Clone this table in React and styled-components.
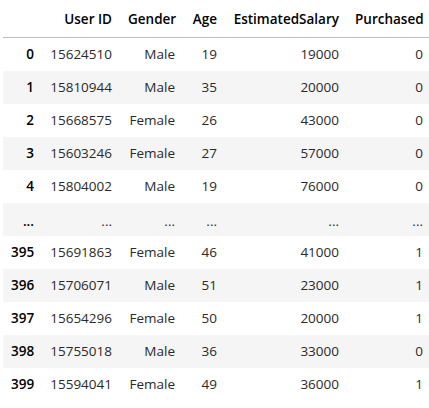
import React from "react";
import styled, { createGlobalStyle } from "styled-components";

const GlobalStyle = createGlobalStyle`
  body {
    margin: 0;
    background: #ffffff;
    overflow: hidden;
    font-family: "Open Sans", "Noto Sans", sans-serif;
  }
`;

const columns = [
  { key: "userId", label: "User ID", width: 78 },
  { key: "gender", label: "Gender", width: 63 },
  { key: "age", label: "Age", width: 42 },
  { key: "salary", label: "EstimatedSalary", width: 122 },
  { key: "purchased", label: "Purchased", width: 84 },
];

const rows = [
  { idx: "0", userId: "15624510", gender: "Male", age: "19", salary: "19000", purchased: "0" },
  { idx: "1", userId: "15810944", gender: "Male", age: "35", salary: "20000", purchased: "0" },
  { idx: "2", userId: "15668575", gender: "Female", age: "26", salary: "43000", purchased: "0" },
  { idx: "3", userId: "15603246", gender: "Female", age: "27", salary: "57000", purchased: "0" },
  { idx: "4", userId: "15804002", gender: "Male", age: "19", salary: "76000", purchased: "0" },
  { idx: "...", userId: "...", gender: "...", age: "...", salary: "...", purchased: "..." },
  { idx: "395", userId: "15691863", gender: "Female", age: "46", salary: "41000", purchased: "1" },
  { idx: "396", userId: "15706071", gender: "Male", age: "51", salary: "23000", purchased: "1" },
  { idx: "397", userId: "15654296", gender: "Female", age: "50", salary: "20000", purchased: "1" },
  { idx: "398", userId: "15755018", gender: "Male", age: "36", salary: "33000", purchased: "0" },
  { idx: "399", userId: "15594041", gender: "Female", age: "49", salary: "36000", purchased: "1" },
];

export default function App() {
  return (
    <>
      <GlobalStyle />
      <Wrapper>
        <Frame>
          <colgroup>
            <col style={{ width: 39 }} />
            {columns.map((c) => (
              <col key={c.key} style={{ width: c.width }} />
            ))}
          </colgroup>
          <thead>
            <tr>
              <HeadCell />
              {columns.map((c) => (
                <HeadCell key={c.key}>{c.label}</HeadCell>
              ))}
            </tr>
          </thead>
          <tbody>
            {rows.map((row, i) => (
              <Row key={row.idx + i} $striped={i % 2 === 1}>
                <IndexCell $ellipsis={row.idx === "..."}>{row.idx}</IndexCell>
                {columns.map((c) => (
                  <Cell key={c.key} $ellipsis={row[c.key] === "..."}>
                    {row[c.key]}
                  </Cell>
                ))}
              </Row>
            ))}
          </tbody>
        </Frame>
      </Wrapper>
    </>
  );
}

const Wrapper = styled.div`
  padding-left: 3px;
  width: 440px;
`;

const Frame = styled.table`
  border-collapse: collapse;
  border-spacing: 0;
  table-layout: fixed;
  width: 428px;
  font-size: 13.5px;
  color: #222;
`;

const HeadCell = styled.th`
  height: 37px;
  padding: 0 8px;
  text-align: right;
  vertical-align: middle;
  font-weight: 600;
  color: #000;
  white-space: nowrap;
  border-bottom: 1px solid #bdbdbd;
`;

const Row = styled.tr`
  height: 33px;
  background: ${(p) => (p.$striped ? "#f5f5f5" : "#ffffff")};
`;

const Cell = styled.td`
  padding: ${(p) => (p.$ellipsis ? "4px 8px 0" : "0 8px")};
  text-align: right;
  vertical-align: middle;
  white-space: nowrap;
  color: #2a2a2a;
`;

const IndexCell = styled(Cell).attrs({ as: "th" })`
  font-weight: 600;
  color: #000;
`;
